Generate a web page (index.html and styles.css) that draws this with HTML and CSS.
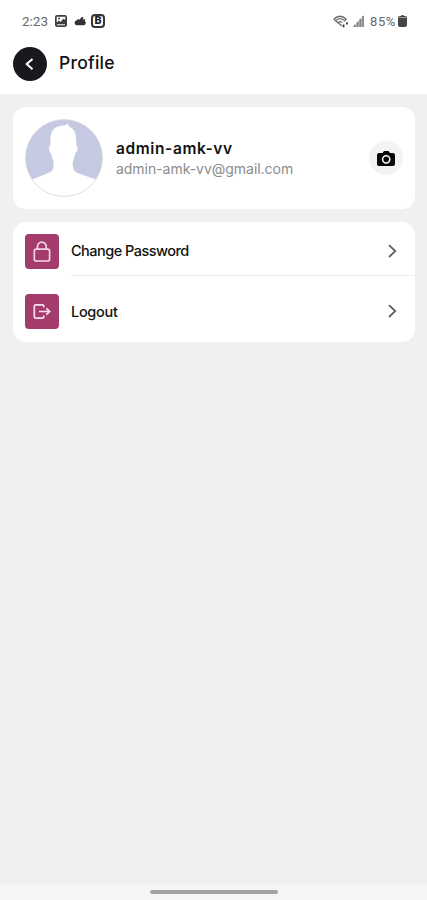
FILE: index.html
```html
<!DOCTYPE html>
<html lang="en">
<head>
<meta charset="utf-8">
<title>Profile</title>
<link rel="stylesheet" href="styles.css">
</head>
<body>
<header class="top">
  <div class="status">
    <span class="time">2:23</span>
    <svg class="s-img" width="12" height="12" viewBox="0 0 12 12"><rect width="12" height="12" rx="2.2" fill="#3c3e41"/><path d="M1.7 1.8h8.6v3L8.3 3.8 5.6 6.9 4 5.6 1.7 7.4z" fill="#fff"/><path d="M2 9.8h8" stroke="#fff" stroke-width="1"/><circle cx="4" cy="3.6" r="1" fill="#3c3e41"/></svg>
    <svg class="s-cloud" width="12" height="10" viewBox="0 0 12 10"><path d="M2.6 9.3A2.4 2.4 0 0 1 2.4 4.6 2.9 2.9 0 0 1 6 3.6 2.7 2.7 0 0 1 9.6 1.2L8.6 3.4l2.7-.4-.6 2.1A2.3 2.3 0 0 1 9.7 9.3z" fill="#303236"/></svg>
    <span class="s-b">B</span>
    <span class="grow"></span>
    <svg width="16" height="13" viewBox="0 0 16 13" fill="none" stroke="#67696b" stroke-width="1.3"><path d="M.8 4.2Q7 -1.6 13.2 4.2L11 6.2M.8 4.2 9 11M3.3 5.2Q7 2.2 10.8 5.2M5.4 7.4Q7.2 6 9 7.4"/><path d="M10.6 9.5v2.7M14 7.2v2.4" stroke="#333" stroke-width="1.7"/></svg>
    <svg class="s-signal" width="11" height="12" viewBox="0 0 11 12"><path d="M0 12 11 0v12z" fill="#bbb"/><path d="M1.5 12V9.8M4.5 12V7M7.3 12V4M10 12V1" stroke="#858688" stroke-width="1.6"/></svg>
    <span class="percent">85%</span>
    <svg class="s-bat" width="9" height="12" viewBox="0 0 9 12"><path d="M3 0h3v1.2H3z" fill="#777"/><rect y="1" width="9" height="11" rx="2" fill="#444648"/><path d="M1 3V2h7v1z" fill="#999"/></svg>
  </div>
  <div class="bar">
    <span class="back"><svg width="34" height="34" viewBox="0 0 34 34" fill="none" stroke="#fff" stroke-width="2"><path d="m19.5 12-5.8 5.1 5.8 5.1"/></svg></span>
    <h1>Profile</h1>
  </div>
</header>
<main>
  <section class="card user">
    <svg class="avatar" width="78" height="78" viewBox="0 0 78 78"><circle cx="39" cy="39" r="38.5" fill="#c5cae2"/><path d="M7 60.4 20 55.2C26 53 28.5 52 28.5 46.5 29 42 26.5 38 26 34 23.5 33 23.5 27 25.4 26.5 24.8 15 27 9 34 7.3 37 6.2 41 7 43.2 4.2 43.4 5.5 43.6 6.3 43.8 7.5 50 10 52 16 51.2 26.5 53.2 27 53 33 50.5 34 49.5 39 47 42 47.8 46.5 48 52 50 53 56 55.2L71 60.4A38.3 38.3 0 0 1 7 60.4z" fill="#fff"/><circle cx="39" cy="39" r="38.5" fill="none" stroke="#d8d9de" stroke-width=".8"/></svg>
    <div class="who"><span class="name">admin-amk-vv</span><span class="mail">admin-amk-vv@gmail.com</span></div>
    <span class="camera"><svg width="18" height="15" viewBox="0 0 18 15"><path fill="#080809" d="M2 2h3.5L7 0h4.5L13 2h3q2 0 2 2v9q0 2-2 2H2q-2 0-2-2V4q0-2 2-2z"/><circle cx="9.2" cy="8.3" r="3.6" fill="none" stroke="#fff" stroke-width="1.5"/></svg></span>
  </section>
  <section class="card menu">
    <div class="row">
      <span class="tile"><svg width="34" height="35" viewBox="0 0 34 35" fill="none" stroke="#f4d5e8" stroke-width="1.7"><rect x="9.3" y="15.2" width="15.3" height="11.8" rx="2"/><path d="M12.5 15V12.4a4.3 4.3 0 0 1 8.7 0V15"/></svg></span>
      <div class="line first"><span class="label change">Change Password</span><svg class="chev" width="9" height="14" viewBox="0 0 9 14"><path d="m1 1.2 6.2 5.9L1 13"/></svg></div>
    </div>
    <div class="row">
      <span class="tile"><svg width="34" height="35" viewBox="0 0 34 35" fill="none" stroke="#f9dfee" stroke-width="1.7"><path d="M18.8 13.5v-1.2q0-1.5-1.5-1.5h-6.5q-1.5 0-1.5 1.5v10.4q0 1.5 1.5 1.5h6.5q1.5 0 1.5-1.5v-1.2M14 17.5h10.5M21.3 14.3l3.4 3.2-3.4 3.2"/></svg></span>
      <div class="line last"><span class="label logout">Logout</span><svg class="chev" width="9" height="14" viewBox="0 0 9 14"><path d="m1 1.2 6.2 5.9L1 13"/></svg></div>
    </div>
  </section>
</main>
<footer class="nav"><span class="handle"></span></footer>
</body>
</html>
```
FILE: styles.css
```css
* { box-sizing: border-box; }
body {
  margin: 0;
  height: 900px;
  display: flex;
  flex-direction: column;
  background: #f0f0f0;
  font-family: Inter, "Liberation Sans", sans-serif;
  color: #111;
}
svg { display: block; flex: none; }
.top { height: 94px; background: #fff; }
.status {
  height: 42px;
  padding: 0 20px 0 22px;
  display: flex;
  align-items: center;
  font-family: Roboto, sans-serif;
  font-size: 13px;
  color: #66686a;
}
.time { width: 33px; font-size: 13.5px; }
.s-cloud { margin-left: 7px; }
.s-b {
  width: 14px;
  height: 14px;
  margin-left: 5px;
  border: 2px solid #333538;
  border-radius: 4px;
  color: #202224;
  font-size: 11px;
  font-weight: 900;
  line-height: 10px;
  text-align: center;
}
.grow { flex: 1; }
.s-signal { margin-left: 4px; }
.percent { margin: 0 2px 0 6px; letter-spacing: 0.6px; }
.bar { height: 44px; padding-left: 13px; display: flex; align-items: center; gap: 12px; }
.back { width: 34px; height: 34px; border-radius: 50%; background: #17191c; }
h1 {
  margin: -2px 0 0;
  font-size: 17.5px;
  font-weight: 500;
  line-height: 24px;
  letter-spacing: 0.25px;
}
main { flex: 1; padding: 13px 12px 0 13px; }
.card { background: #fff; border-radius: 13px; }
.user { height: 102px; padding: 0 12px; display: flex; align-items: center; }
.who { flex: 1; margin-left: 13px; display: flex; flex-direction: column; }
.name { font-size: 15.5px; font-weight: 600; line-height: 20px; letter-spacing: 0.6px; }
.mail { font-size: 14px; line-height: 19px; letter-spacing: -0.03px; color: #8c8c8c; }
.camera {
  width: 34px;
  height: 34px;
  display: grid;
  place-items: center;
  border-radius: 50%;
  background: #f2f3f5;
}
.menu { height: 120px; margin-top: 13px; }
.row { height: 60px; padding-left: 12px; display: flex; align-items: center; }
.tile { width: 34px; height: 35px; margin-top: -1px; border-radius: 4px; background: #a33b6d; }
.line {
  flex: 1;
  margin-left: 12px;
  padding-right: 18px;
  display: flex;
  align-items: center;
  justify-content: space-between;
}
.first { height: 54px; align-self: flex-start; padding-top: 4px; border-bottom: 1px solid #eee; }
.last { height: 58px; align-self: flex-start; }
.label { font-size: 14.5px; font-weight: 500; }
.change { letter-spacing: -0.53px; }
.logout { letter-spacing: -0.3px; }
.chev { fill: none; stroke: #5d5d5d; stroke-width: 1.8; }
.nav {
  height: 16px;
  display: flex;
  justify-content: center;
  align-items: center;
  background: #f5f5f5;
}
.handle { width: 128px; height: 4px; border-radius: 2px; background: #a3a3a3; }
```
